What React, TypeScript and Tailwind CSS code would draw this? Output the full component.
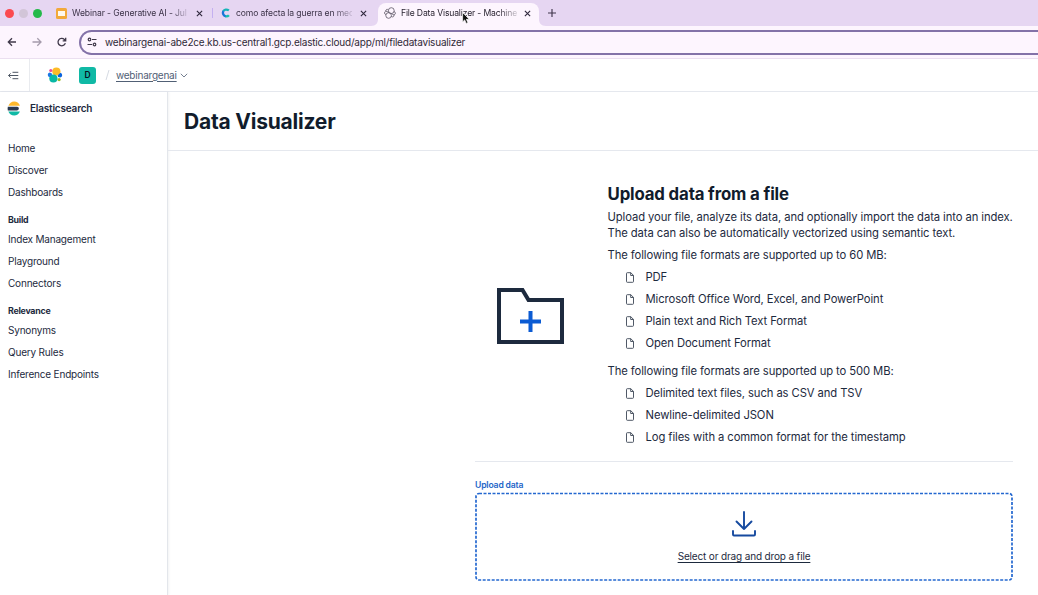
import React from 'react';

const Close = ({ className = '' }: { className?: string }) => (
  <svg viewBox="0 0 8 8" className={`h-[7px] w-[7px] shrink-0 ${className}`} fill="none" stroke="#30283d" strokeWidth="1.3">
    <path d="M1 1l6 6M7 1L1 7" />
  </svg>
);

const SlidesIcon = () => (
  <svg viewBox="0 0 11 11" className="h-[11px] w-[11px] shrink-0">
    <rect width="11" height="11" rx="1.5" fill="#f2a93b" />
    <rect x="2" y="3" width="7" height="5" fill="#fff8ee" />
  </svg>
);

const SwirlIcon = () => (
  <svg viewBox="0 0 10 10" className="h-[10px] w-[10px] shrink-0" fill="none" strokeWidth="2.3">
    <path d="M2.300 3.200C3.300 1.400 5.800 1 7.900 2.400" stroke="#16b3b8" />
    <path d="M2.300 3C1.300 5.400 2.500 8.300 5 8.400" stroke="#1976d8" />
    <path d="M4.600 8.400c1.500.1 2.600-.3 3.300-1.200" stroke="#16bfae" />
  </svg>
);

const BallIcon = () => (
  <svg viewBox="0 0 12 12" className="h-[12px] w-[12px] shrink-0" fill="none" stroke="#5c5664" strokeWidth=".8">
    <circle cx="7.300" cy="3.600" r="2.900" />
    <circle cx="4.600" cy="8.500" r="2.800" />
    <path d="M4.500 3.100C3.300 1.700 1.600 2.300 1.800 4.100M1.800 4.100C.1 4.900.1 7 1.900 7.700M1.800 4.100l3.200 1.300M9.900 4.400c2 .7 2 2.800.1 3.600L7.300 6.500M10 8c.3 1.800-1.400 2.500-2.800 1.400" />
  </svg>
);

const ElasticCluster = () => (
  <svg viewBox="0 0 16 16" className="h-4 w-4 shrink-0">
    <circle cx="9.400" cy="4.500" r="4.100" fill="#fdbb26" />
    <circle cx="6.400" cy="11.500" r="4.100" fill="#08b8a5" />
    <circle cx="3.800" cy="3.500" r="1.600" fill="#ee4c98" />
    <path d="M2.600 5.600a2.400 2.400 0 0 0-.2 4.600l2.700-2.400-.5-1.600z" fill="#1b79e4" />
    <circle cx="12.100" cy="12.600" r="1.600" fill="#9bbb23" />
    <path d="M13.300 10.600a2.500 2.500 0 0 0 .2-4.800l-2.900 2.600.5 1.600z" fill="#0b64dd" />
  </svg>
);

const ElasticsearchLogo = () => (
  <svg viewBox="0 0 14 16" className="h-[15px] w-[14px] shrink-0">
    <path d="M1 5A7.200 7.200 0 0 1 7.200.6c2.700 0 5 1.600 6.100 4.400z" fill="#fdb82c" />
    <path d="M.4 6.200h9.900a1.900 1.900 0 0 1 0 3.800H.4a8 8 0 0 1 0-3.800z" fill="#2b394f" />
    <path d="M1 11.200h12.300c-1.100 2.700-3.400 4.300-6.100 4.300A7.200 7.200 0 0 1 1 11.200z" fill="#10b9a5" />
  </svg>
);

const FileIcon = () => (
  <svg viewBox="0 0 8 11" className="h-[11px] w-[8px] shrink-0" fill="none" stroke="#3c4656" strokeWidth=".9">
    <path d="M1.300.7h3.500l2.700 2.700v6.100a.8.8 0 0 1-.8.8H1.300a.8.8 0 0 1-.8-.8v-8a.8.8 0 0 1 .8-.8z" />
    <path d="M4.700.7v2.800h2.800" />
  </svg>
);

const NavItem = ({ children }: { children: string }) => (
  <a className="flex h-[22px] items-center text-[10px] tracking-[-0.190px] text-[#1d2a3e]">{children}</a>
);

const NavTitle = ({ children }: { children: string }) => (
  <div className="mt-[8px] flex h-[17px] items-center text-[8.800px] font-bold tracking-[-0.240px] text-[#1d2a3e]">{children}</div>
);

const FormatList = ({ items }: { items: string[] }) => (
  <ul>
    {items.map((item) => (
      <li key={item} className="flex h-[22px] items-center gap-[12px] pl-[18px]">
        <FileIcon />
        <span>{item}</span>
      </li>
    ))}
  </ul>
);

const TabBar = () => (
  <div className="flex h-[26px] shrink-0 items-end bg-[#e6d6f2] text-[8.600px] text-[#3b3247]">
    <div className="flex h-[26px] w-[56px] items-center gap-[5px] pl-[5px]">
      <span className="h-[9px] w-[9px] rounded-full bg-[#fb4a50]" />
      <span className="h-[9px] w-[9px] rounded-full bg-[#d2c5d8]" />
      <span className="h-[9px] w-[9px] rounded-full bg-[#24b94a]" />
    </div>
    <div className="flex h-[26px] w-[157px] items-center">
      <SlidesIcon />
      <span className="ml-[5px] w-[117px] whitespace-nowrap tracking-[-0.110px] [mask-image:linear-gradient(to_right,#000_99px,transparent_119px)]">
        Webinar - Generative AI - Jul
      </span>
      <Close className="ml-[7px]" />
      <span className="ml-auto h-[10px] w-px bg-[#c4b0f0]" />
    </div>
    <div className="flex h-[26px] w-[158px] items-center pl-[8px]">
      <SwirlIcon />
      <span className="ml-[5px] w-[116px] whitespace-nowrap tracking-[-0.130px] [mask-image:linear-gradient(to_right,#000_98px,transparent_120px)]">
        como afecta la guerra en med
      </span>
      <Close className="ml-[8px]" />
    </div>
    <svg viewBox="0 0 7 7" className="h-[7px] w-[7px]" fill="#fdf5fe"><path d="M0 7C5 7 7 4 7 0v7z" /></svg>
    <div className="flex h-[23px] w-[161px] items-center rounded-t-[8px] bg-[#fdf5fe] pb-[3px] pl-[6px] text-[#292330]">
      <BallIcon />
      <span className="ml-[5px] w-[116px] whitespace-nowrap tracking-[-0.160px] [mask-image:linear-gradient(to_right,#000_98px,transparent_120px)]">
        File Data Visualizer - Machine
      </span>
      <Close className="ml-[7px]" />
    </div>
    <svg viewBox="0 0 7 7" className="h-[7px] w-[7px]" fill="#fdf5fe"><path d="M0 0c0 4 2 7 7 7H0z" /></svg>
    <svg viewBox="0 0 9 9" className="mb-[9px] ml-[2px] h-[8px] w-[8px]" stroke="#40364c" strokeWidth="1.300"><path d="M4.500 0v9M0 4.500h9" /></svg>
  </div>
);

const Toolbar = () => (
  <div className="flex h-[33px] shrink-0 items-center overflow-hidden border-b border-[#ebdff0] bg-[#fdf5fe]">
    <svg viewBox="0 0 79 14" className="h-[14px] w-[79px] shrink-0" fill="none" strokeWidth="1.300">
      <path d="M16 7H8.500M12 3.300L8.300 7l3.700 3.700" stroke="#40394a" />
      <path d="M32.500 7H41M37.300 3.300L41 7l-3.700 3.700" stroke="#a59bac" />
      <path d="M65.300 8.100A3.700 3.700 0 1 1 64.400 4.500L65.600 5.700M65.700 2.800v3h-3" stroke="#40394a" />
    </svg>
    <div className="flex h-[25px] w-[980px] shrink-0 items-center rounded-l-full border-2 border-r-0 border-[#8372a8] bg-[#fdf5fe] pl-[6px]">
      <svg viewBox="0 0 10 10" className="h-[10px] w-[10px]" fill="none" stroke="#40394a" strokeWidth="1.200">
        <circle cx="2.500" cy="2.500" r="1.300" /><path d="M5 2.500h4.500M.5 7.500H5" /><circle cx="7.500" cy="7.500" r="1.300" />
      </svg>
      <span className="ml-[8px] whitespace-nowrap text-[10px] tracking-[-0.200px] text-[#302938]">
        webinargenai-abe2ce.kb.us-central1.gcp.elastic.cloud/app/ml/filedatavisualizer
      </span>
    </div>
  </div>
);

const Header = () => (
  <header className="flex h-[33px] shrink-0 items-center border-b border-[#e5e8ee] bg-white">
    <div className="flex h-full w-[30px] items-center border-r border-[#e9ebef] pl-[8px]">
      <svg viewBox="0 0 11 9" className="h-[9px] w-[11px]" fill="none" stroke="#3b4553" strokeWidth=".9">
        <path d="M4.500 1.300h5.800M.6 4.500h9.700M4.500 7.700h5.800M2.600 2.400L.6 4.500l2 2.100" />
      </svg>
    </div>
    <div className="ml-[17px]"><ElasticCluster /></div>
    <div className="ml-[16px] flex h-[17px] w-[17px] items-center justify-center rounded-[3px] bg-[#10b9a5] text-[8.500px] font-semibold text-[#07101f]">D</div>
    <svg viewBox="0 0 5 12" className="ml-[9px] h-[12px] w-[5px]" stroke="#d0d6df" strokeWidth=".9"><path d="M4 1L1 11" /></svg>
    <span className="ml-[6px] text-[10px] tracking-[-0.230px] text-[#516075] underline underline-offset-[1.500px]">webinargenai</span>
    <svg viewBox="0 0 8 5" className="ml-[3px] h-[5px] w-[8px]" fill="none" stroke="#657083" strokeWidth=".9"><path d="M.8.8L4 4 7.200.8" /></svg>
  </header>
);

export default function App() {
  return (
    <div className="relative flex h-[595px] w-[1038px] flex-col overflow-hidden bg-white font-['Inter',sans-serif]">
      <TabBar />
      <Toolbar />
      <Header />
      <div className="flex min-h-0 flex-1">
        <nav className="flex w-[168px] shrink-0 flex-col border-r border-[#e3e6eb] pl-[8px] shadow-[1px_0_2px_rgba(40,50,70,0.06)]">
          <div className="-ml-[1px] flex h-[33px] items-center gap-[9px] text-[10px] font-semibold tracking-[-0.200px] text-[#1d2a3e]">
            <ElasticsearchLogo />
            <span>Elasticsearch</span>
          </div>
          <div className="h-[12px]" />
          <NavItem>Home</NavItem>
          <NavItem>Discover</NavItem>
          <NavItem>Dashboards</NavItem>
          <NavTitle>Build</NavTitle>
          <NavItem>Index Management</NavItem>
          <NavItem>Playground</NavItem>
          <NavItem>Connectors</NavItem>
          <NavTitle>Relevance</NavTitle>
          <NavItem>Synonyms</NavItem>
          <NavItem>Query Rules</NavItem>
          <NavItem>Inference Endpoints</NavItem>
        </nav>
        <main className="flex min-w-0 flex-1 flex-col">
          <div className="flex h-[59px] shrink-0 items-center border-b border-[#e5e8ee] pt-[2px] pl-[16px]">
            <h1 className="text-[21px] font-[650] tracking-[-0.220px] text-[#111c2c]">Data Visualizer</h1>
          </div>
          <div className="ml-[307px] w-[538px]">
            <section className="flex h-[311px] border-b border-[#e5e8ee]">
              <div className="flex w-[132px] shrink-0 items-center pl-[22px] pt-[19px]">
                <svg viewBox="0 0 67 56" className="h-[56px] w-[67px]" fill="none" strokeWidth="4">
                  <path d="M2 2h23.500l6 10H65v42H2z" stroke="#1d2a3e" />
                  <path d="M33.500 23v21M23 33.500h21" stroke="#0b5bd3" />
                </svg>
              </div>
              <div className="whitespace-nowrap pt-[32px] pl-[0.500px] text-[11.250px] leading-[16.500px] tracking-[-0.090px] text-[#1d2a3e]">
                <h2 className="text-[16.800px] leading-[22px] font-[650] tracking-[-0.150px] text-[#111c2c]">Upload data from a file</h2>
                <p className="mt-[3.500px]">
                  Upload your file, analyze its data, and optionally import the data into an index.
                  <br />
                  The data can also be automatically vectorized using semantic text.
                </p>
                <p className="mt-[5.500px] mb-[3px]">The following file formats are supported up to 60 MB:</p>
                <FormatList items={['PDF', 'Microsoft Office Word, Excel, and PowerPoint', 'Plain text and Rich Text Format', 'Open Document Format']} />
                <p className="mt-[8.500px] mb-[3px]">The following file formats are supported up to 500 MB:</p>
                <FormatList items={['Delimited text files, such as CSV and TSV', 'Newline-delimited JSON', 'Log files with a common format for the timestamp']} />
              </div>
            </section>
            <div className="mt-[16px] flex h-[14px] items-center text-[8.600px] font-semibold tracking-[-0.160px] text-[#1d65c8]">Upload data</div>
            <div className="relative flex h-[89px] flex-col items-center">
              <svg className="absolute inset-0 h-full w-full" fill="none">
                <rect x="1" y="1.500" width="536" height="86.500" rx="3" stroke="#2468d0" strokeWidth="1.700" strokeDasharray="3 1.500" />
              </svg>
              <svg viewBox="0 0 24 26" className="mt-[18.500px] h-[26px] w-[24px]" fill="none" stroke="#164a9f" strokeWidth="1.900" strokeLinecap="round" strokeLinejoin="round">
                <path d="M12 1v17M4.500 10.500L12 18l7.500-7.500M1 20v3.500a1 1 0 0 0 1 1h20a1 1 0 0 0 1-1V20" />
              </svg>
              <span className="mt-[12.500px] text-[10px] leading-[14px] tracking-[-0.150px] text-[#1d2a3e] underline underline-offset-[1.500px]">Select or drag and drop a file</span>
            </div>
          </div>
        </main>
      </div>
      <svg viewBox="0 0 8 12" className="absolute top-[12px] left-[462px] h-[12px] w-[8px]">
        <path d="M.6.600v9.300l2.100-2 1.500 3.500 1.700-.7-1.500-3.400h2.900z" fill="#111" stroke="#fff" strokeWidth=".7" />
      </svg>
    </div>
  );
}
